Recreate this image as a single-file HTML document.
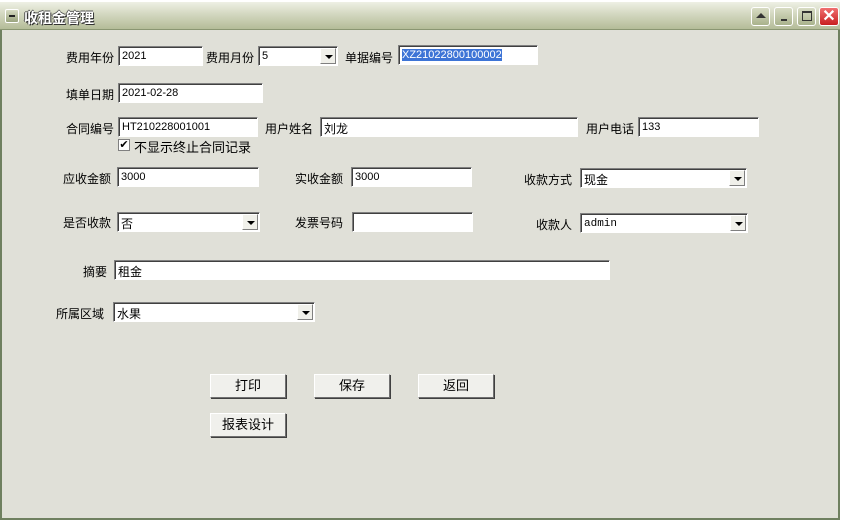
<!DOCTYPE html>
<html><head><meta charset="utf-8"><style>
*{box-sizing:border-box;margin:0;padding:0}
body{width:842px;height:520px;overflow:hidden;background:#fff;font-family:"Liberation Sans","Noto Sans CJK SC","WenQuanYi Zen Hei",sans-serif;font-size:12px;color:#000;position:relative}
#win{position:absolute;left:0;top:2px;width:840px;height:518px;background:#e0e0d8;border:2px solid #6f8060;border-top:none}
#tb{position:absolute;left:0;top:2px;width:840px;height:28px;background:linear-gradient(#eef0e4,#d6dac4 40%,#b4bc98);border-bottom:1px solid #8a9672}
#tb .t{position:absolute;left:24px;top:6px;font-size:14px;font-weight:bold;color:#fff;text-shadow:1px 1px 0 #333,-1px 0 0 #555,0 -1px 0 #555}
.ib{position:absolute;top:5px;width:19px;height:19px;border:1px solid #fff;border-radius:3px;background:linear-gradient(#d8dcc4,#a9b28c)}
.l{position:absolute;white-space:nowrap}
.i{position:absolute;height:20px;background:#fff;border-top:1px solid #808080;border-left:1px solid #808080;border-right:1px solid #fff;border-bottom:1px solid #fff;box-shadow:inset 1px 1px 0 #404040;padding:3px 0 0 3px;white-space:nowrap;overflow:hidden;font-size:11px}
.s .a{position:absolute;right:1px;top:1px;width:16px;height:16px;background:#f0f0ea;border:1px solid;border-color:#fff #808080 #808080 #fff}
.s .a:after{content:"";position:absolute;left:4px;top:6px;border:4px solid transparent;border-top:4px solid #000;border-bottom:0}
.b{position:absolute;width:76px;height:24px;background:#f0f0ec;border:1px solid;border-color:#fff #707070 #707070 #fff;box-shadow:1px 1px 0 #404040;text-align:center;line-height:22px;font-size:13px}
</style></head><body>
<div id="win"></div>
<div id="tb">
<div style="position:absolute;left:5px;top:7px;width:14px;height:14px;border:1px solid #fff;border-radius:2px;background:linear-gradient(#d8dcc4,#9aa47e)"><div style="position:absolute;left:3px;top:5px;width:6px;height:2px;background:#222"></div></div>
<div class="t">收租金管理</div>
<div class="ib" style="left:751px"><div style="position:absolute;left:4px;top:5px;border:5px solid transparent;border-bottom:5px solid #333;border-top:0"></div></div>
<div class="ib" style="left:774px"><div style="position:absolute;left:6px;top:11px;width:6px;height:2px;background:#333"></div></div>
<div class="ib" style="left:797px"><div style="position:absolute;left:4px;top:3px;width:10px;height:10px;border:1px solid #333;border-top:2px solid #333"></div></div>
<div class="ib" style="left:819px;width:20px;background:linear-gradient(#f07070,#c82020);color:#fff;font-size:16px;font-weight:bold;text-align:center;line-height:17px">✕</div>
</div>

<div class="l" style="left:66px;top:49px">费用年份</div><div class="i" style="left:118px;top:46px;width:85px">2021</div>
<div class="l" style="left:206px;top:49px">费用月份</div><div class="i s" style="left:258px;top:46px;width:80px">5<div class="a"></div></div>
<div class="l" style="left:345px;top:49px">单据编号</div><div class="i" style="left:398px;top:45px;width:140px"><span style="background:#3d74d6;color:#fff">XZ21022800100002</span></div>

<div class="l" style="left:66px;top:86px">填单日期</div><div class="i" style="left:118px;top:83px;width:145px">2021-02-28</div>

<div class="l" style="left:66px;top:120px">合同编号</div><div class="i" style="left:118px;top:117px;width:140px">HT210228001001</div>
<div class="l" style="left:265px;top:120px">用户姓名</div><div class="i" style="left:320px;top:117px;width:258px;font-size:12px;padding-top:2px">刘龙</div>
<div class="l" style="left:586px;top:120px">用户电话</div><div class="i" style="left:638px;top:117px;width:121px">133</div>
<div style="position:absolute;left:118px;top:139px;width:12px;height:12px;background:#fff;border:1px solid #808080;font-size:11px;line-height:10px;text-align:center">✔</div>
<div class="l" style="left:134px;top:137px;font-size:13px">不显示终止合同记录</div>

<div class="l" style="left:63px;top:170px">应收金额</div><div class="i" style="left:117px;top:167px;width:142px">3000</div>
<div class="l" style="left:295px;top:170px">实收金额</div><div class="i" style="left:351px;top:167px;width:121px">3000</div>
<div class="l" style="left:524px;top:171px">收款方式</div><div class="i s" style="left:580px;top:168px;width:167px;font-size:12px;padding-top:2px">现金<div class="a"></div></div>

<div class="l" style="left:63px;top:214px">是否收款</div><div class="i s" style="left:117px;top:212px;width:143px;font-size:12px;padding-top:2px">否<div class="a"></div></div>
<div class="l" style="left:295px;top:214px">发票号码</div><div class="i" style="left:352px;top:212px;width:121px"></div>
<div class="l" style="left:536px;top:216px">收款人</div><div class="i s" style="left:580px;top:213px;width:168px;font-family:'Liberation Mono',monospace;font-size:11px;padding-top:4px">admin<div class="a"></div></div>

<div class="l" style="left:83px;top:263px">摘要</div><div class="i" style="left:114px;top:260px;width:496px;font-size:12px;padding-top:2px">租金</div>
<div class="l" style="left:56px;top:305px">所属区域</div><div class="i s" style="left:113px;top:302px;width:202px;font-size:12px;padding-top:2px">水果<div class="a"></div></div>

<div class="b" style="left:210px;top:374px">打印</div>
<div class="b" style="left:314px;top:374px">保存</div>
<div class="b" style="left:418px;top:374px">返回</div>
<div class="b" style="left:210px;top:413px">报表设计</div>
</body></html>
